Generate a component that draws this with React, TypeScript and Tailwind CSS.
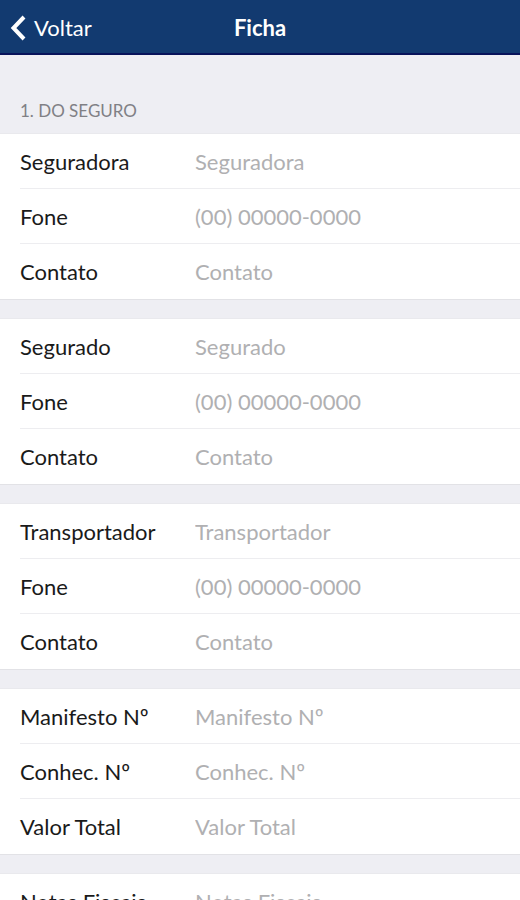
import React, { useState } from 'react';

interface Field {
  id: string;
  label: string;
  placeholder: string;
  type?: string;
}

const groups: Field[][] = [
  [
    { id: 'seguradora', label: 'Seguradora', placeholder: 'Seguradora' },
    { id: 'seguradora-fone', label: 'Fone', placeholder: '(00) 00000-0000', type: 'tel' },
    { id: 'seguradora-contato', label: 'Contato', placeholder: 'Contato' },
  ],
  [
    { id: 'segurado', label: 'Segurado', placeholder: 'Segurado' },
    { id: 'segurado-fone', label: 'Fone', placeholder: '(00) 00000-0000', type: 'tel' },
    { id: 'segurado-contato', label: 'Contato', placeholder: 'Contato' },
  ],
  [
    { id: 'transportador', label: 'Transportador', placeholder: 'Transportador' },
    { id: 'transportador-fone', label: 'Fone', placeholder: '(00) 00000-0000', type: 'tel' },
    { id: 'transportador-contato', label: 'Contato', placeholder: 'Contato' },
  ],
  [
    { id: 'manifesto', label: 'Manifesto Nº', placeholder: 'Manifesto Nº' },
    { id: 'conhecimento', label: 'Conhec. Nº', placeholder: 'Conhec. Nº' },
    { id: 'valor-total', label: 'Valor Total', placeholder: 'Valor Total' },
  ],
  [{ id: 'notas-fiscais', label: 'Notas Fiscais', placeholder: 'Notas Fiscais' }],
];

export default function App() {
  const [values, setValues] = useState<{ [key: string]: string }>({});

  return (
    <div className="h-screen flex flex-col overflow-hidden bg-[#eeeef3] font-['Lato',sans-serif] text-[22px] text-[#1a1a1a]">
      {/* Navigation bar */}
      <header className="h-[55px] shrink-0 grid grid-cols-[1fr_auto_1fr] items-center bg-[#123a70] border-b-2 border-[#08135a] px-2.5 pt-0.5 text-white">
        <button type="button" className="flex items-center gap-2 justify-self-start">
          <svg viewBox="0 0 16 26" className="w-4 h-[26px]" fill="none" stroke="currentColor" strokeWidth="4">
            <path d="M14 2 3.500 13l10.500 11" />
          </svg>
          Voltar
        </button>
        <h1 className="font-bold">Ficha</h1>
      </header>

      {/* Form */}
      <main className="flex-1 overflow-hidden">
        <h2 className="pt-[42px] pb-2 px-5 text-[17px] leading-7 text-[#808085]">1. DO SEGURO</h2>
        <form className="flex flex-col gap-[18px]">
          {groups.map((fields) => (
            <div key={fields[0].id} className="bg-white border-y border-t-[#e9e9ed] border-b-[#e2e2e6] pl-5">
              {fields.map((field) => (
                <div key={field.id} className="h-[55px] flex items-center border-b border-[#ededf0] last:border-b-0">
                  <label htmlFor={field.id} className="w-[175px] shrink-0">
                    {field.label}
                  </label>
                  <input
                    id={field.id}
                    type={field.type ?? 'text'}
                    value={values[field.id] ?? ''}
                    placeholder={field.placeholder}
                    onChange={(e) => setValues({ ...values, [field.id]: e.target.value })}
                    className="flex-1 min-w-0 bg-transparent outline-none placeholder:text-[#b0b0b2]"
                  />
                </div>
              ))}
            </div>
          ))}
        </form>
      </main>
    </div>
  );
}
